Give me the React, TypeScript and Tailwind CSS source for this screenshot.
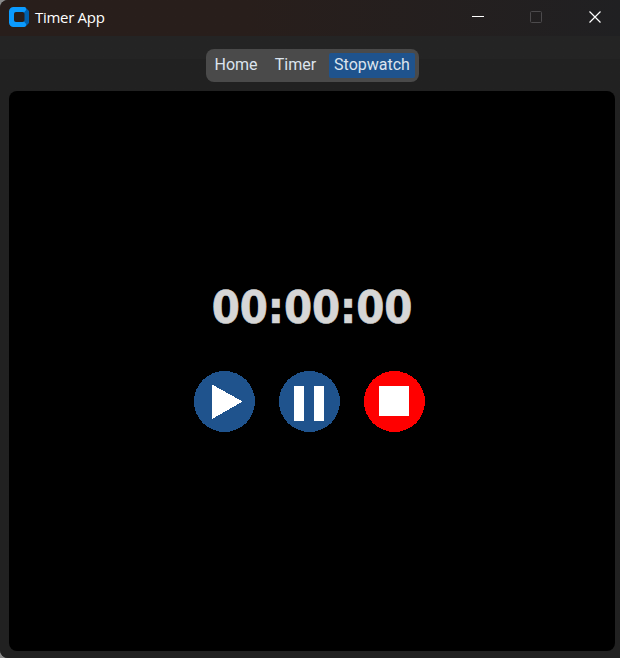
import React from "react";

function TitleBar() {
  return (
    <header className="flex h-9 items-center bg-linear-to-r from-[#281e1b] from-40% to-[#202022] pb-0.5 pl-[9px]">
      <svg width="20" height="20" viewBox="0 0 20 20">
        <path d="M13 0h3l4 4v12l-4 4h-3z" fill="#0060ad" />
        <path d="M4.500 0H15a2.200 2.200 0 0 1 1.500 3.800L15 5.500v9l1.500 1.700A2.200 2.200 0 0 1 15 20H4.500A4.500 4.500 0 0 1 0 15.500v-11A4.500 4.500 0 0 1 4.500 0Z" fill="#0b9bff" />
        <rect x="5" y="5" width="10.500" height="10" rx="2" fill="#281e1b" />
      </svg>
      <h1 className="ml-1.5 grow font-['Open_Sans',sans-serif] text-[15px] leading-5 tracking-[-0.3px] text-white">Timer App</h1>
      <div className="flex items-center gap-[46px] pr-[19px]">
        <svg width="12" height="12" shapeRendering="crispEdges">
          <rect y="5" width="12" height="1" fill="#fff" />
        </svg>
        <svg width="12" height="12">
          <rect x=".5" y=".5" width="11" height="11" rx="1" fill="none" stroke="#4c4a4c" />
        </svg>
        <svg className="ml-px" width="12" height="12">
          <path d="M.5.5l11 11M11.500.5l-11 11" stroke="#fff" strokeWidth="1.200" />
        </svg>
      </div>
    </header>
  );
}

function Tabs() {
  return (
    <nav className="flex h-[33px] w-[213px] rounded-lg bg-[#4a4a4a] pt-1 pl-1 text-base text-[#dce4ee]">
      <button className="h-[25px] w-[52px] rounded-xs pb-0.5 pl-px leading-[21px]">Home</button>
      <button className="ml-2 h-[25px] w-[52px] rounded-xs pb-0.5 leading-[21px]">Timer</button>
      <button className="ml-[7px] h-[25px] w-[86px] rounded-xs bg-[#1f538d] pb-0.5 pl-px leading-[21px]">Stopwatch</button>
    </nav>
  );
}

function Controls() {
  return (
    <div className="mt-9 flex gap-6">
      <button aria-label="Start">
        <svg width="61" height="61" shapeRendering="crispEdges">
          <circle cx="30.500" cy="30.500" r="30.500" fill="#1f538d" />
          <path d="M18 13.500 48.500 30.500 18 48Z" fill="#fff" />
        </svg>
      </button>
      <button aria-label="Pause">
        <svg width="61" height="61" shapeRendering="crispEdges">
          <circle cx="30.500" cy="30.500" r="30.500" fill="#1f538d" />
          <path d="M15 15h10v35H15zM35 15h10v35H35z" fill="#fff" />
        </svg>
      </button>
      <button aria-label="Stop">
        <svg width="61" height="61" shapeRendering="crispEdges">
          <circle cx="30.500" cy="30.500" r="30.500" fill="#f00" />
          <path d="M15 15h30v30H15z" fill="#fff" />
        </svg>
      </button>
    </div>
  );
}

export default function App() {
  return (
    <div className="bg-[#8b8b8b]">
      <div className="flex h-[658px] w-[620px] flex-col overflow-hidden rounded-l-lg bg-[#242424] font-['Roboto',sans-serif]">
        <TitleBar />
        <div className="flex grow flex-col items-center bg-linear-to-b from-[#242424] from-[23px] to-[#212121] to-[23px] pt-[13px] pr-[5px] pb-[7px] pl-[9px]">
          <Tabs />
          <main className="mt-[9px] flex w-full grow flex-col items-center rounded-lg bg-black pt-[189px] pr-[5px]">
            <div className="ml-[5px] h-[55px] font-['DejaVu_Sans_Condensed','DejaVu_Sans',sans-serif] text-[45px] leading-[55px] font-bold tracking-[-0.1px] text-[#d6d6d6] [-webkit-text-stroke:0.6px_#d6d6d6] [font-stretch:condensed]">00:00:00</div>
            <Controls />
          </main>
        </div>
      </div>
    </div>
  );
}
